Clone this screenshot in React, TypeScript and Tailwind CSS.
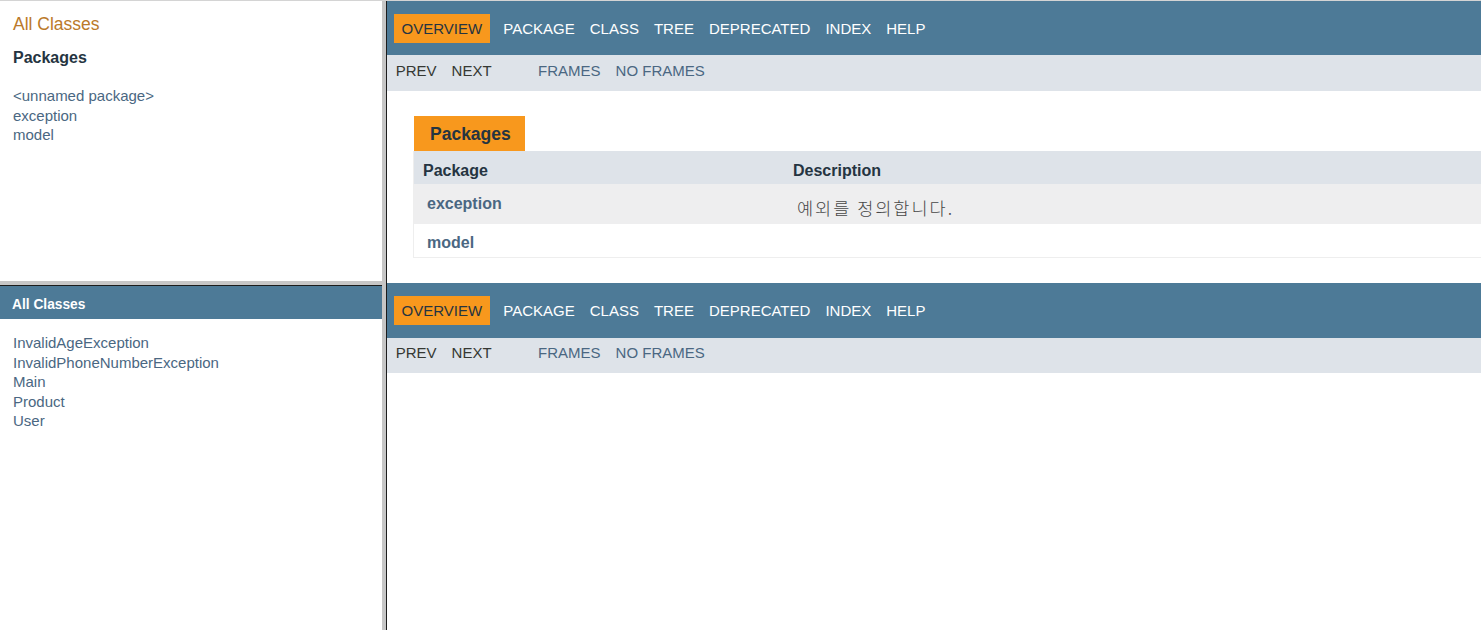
import React from 'react';

const navItems = ['PACKAGE', 'CLASS', 'TREE', 'DEPRECATED', 'INDEX', 'HELP'];
const packages = ['<unnamed package>', 'exception', 'model'];
const classes = ['InvalidAgeException', 'InvalidPhoneNumberException', 'Main', 'Product', 'User'];

const TopNav: React.FC<{ tall?: boolean }> = ({ tall }) => (
  <>
    <div className={`flex items-start bg-[#4d7a97] pt-[13px] ${tall ? 'h-[55px]' : 'h-[54px]'}`}>
      <div className="ml-[7px] mr-[6.25px] flex h-[29px] items-center bg-[#f8981d] px-[7.5px] pt-[2px] text-[15px] text-[#253441]">
        OVERVIEW
      </div>
      {navItems.map((n) => (
        <div key={n} className="flex h-[29px] items-center px-[7.5px] pt-[2px] text-[15px] text-white">
          {n}
        </div>
      ))}
    </div>
    <div className={`flex items-center bg-[#dee3e9] pb-[4px] pl-[1.2px] text-[15px] ${tall ? 'h-[35px]' : 'h-[36px]'}`}>
      <span className="px-[7.5px] text-[#353833]">PREV</span>
      <span className="px-[7.5px] text-[#353833]">NEXT</span>
      <span className="ml-[31.5px] px-[7.5px] text-[#4a6782]">FRAMES</span>
      <span className="px-[7.5px] text-[#4a6782]">NO FRAMES</span>
    </div>
  </>
);

export default function App() {
  return (
    <div
      className="flex h-[630px] w-[1481px] overflow-hidden border-t border-[#d4d4d4] bg-white"
      style={{ fontFamily: '"Liberation Sans", Arial, sans-serif' }}
    >
      {/* left column: package list + class list */}
      <div className="flex w-[382px] flex-col">
        <div className="h-[280px] px-[13px] pt-[1px]">
          <div className="flex h-[44px] items-center text-[17.5px] text-[#bb7a2a]">All Classes</div>
          <div className="flex h-[24px] items-center text-[16px] font-bold text-[#253441]">Packages</div>
          <ul className="mt-[16px] text-[15px] leading-[19.5px] text-[#4a6782]">
            {packages.map((p) => (
              <li key={p}>{p}</li>
            ))}
          </ul>
        </div>
        <div className="h-[4px] bg-[#c6c6c6]" />
        <div className="flex-1 border-t border-[#1c1c1c]">
          <div className="flex h-[33px] items-center bg-[#4d7a97] pl-[12px] pt-[5px] text-[13.75px] font-bold text-white">
            All Classes
          </div>
          <ul className="mt-[14px] pl-[13px] text-[15px] leading-[19.5px] text-[#4a6782]">
            {classes.map((c) => (
              <li key={c}>{c}</li>
            ))}
          </ul>
        </div>
      </div>

      <div className="w-[4px] bg-[#c6c6c6]" />

      {/* right frame: overview */}
      <div className="flex min-w-0 flex-1 flex-col overflow-hidden border-l border-[#1c1c1c]">
        <TopNav />

        <div className="ml-[27px] mt-[25px] flex h-[35px] w-[111px] items-center bg-[#f8981d] pl-[16px] pt-[2px] text-[17.5px] font-bold text-[#253441]">
          Packages
        </div>
        <div className="ml-[26px] border-b border-l border-[#eeeeee] text-[16px]">
          <div className="grid h-[33px] grid-cols-[379px_1fr] bg-[#dee3e9] pt-[7px] font-bold text-[#253441]">
            <div className="flex items-center pl-[9px]">Package</div>
            <div className="flex items-center">Description</div>
          </div>
          <div className="grid h-[40px] grid-cols-[379px_1fr] bg-[#eeeeef]">
            <div className="flex items-center pl-[13px] font-bold text-[#4a6782]">exception</div>
            <div
              className="flex items-center pl-[4px] pt-[8px] text-[17.5px] tracking-[2px] text-[#474747]"
              style={{ fontFamily: '"Noto Sans CJK KR", sans-serif', fontWeight: 300 }}
            >
              예외를 정의합니다.
            </div>
          </div>
          <div className="grid h-[33px] grid-cols-[379px_1fr] bg-white pt-[5px]">
            <div className="flex items-center pl-[13px] font-bold text-[#4a6782]">model</div>
            <div />
          </div>
        </div>

        <div className="mt-[25px]">
          <TopNav tall />
        </div>
      </div>
    </div>
  );
}
